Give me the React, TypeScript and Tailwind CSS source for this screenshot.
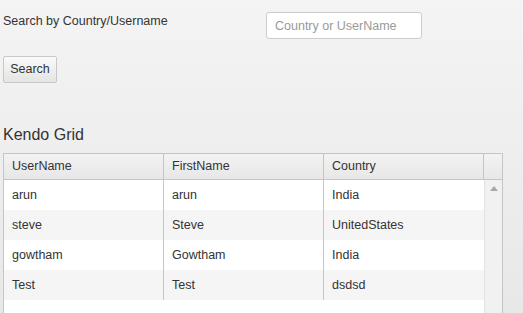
import React from 'react';

const rows = [
  { user: 'arun', first: 'arun', country: 'India' },
  { user: 'steve', first: 'Steve', country: 'UnitedStates' },
  { user: 'gowtham', first: 'Gowtham', country: 'India' },
  { user: 'Test', first: 'Test', country: 'dsdsd' },
];

export default function App() {
  return (
    <div className="w-[523px] h-[313px] overflow-hidden bg-gradient-to-b from-[#f4f4f4] to-[#e8e8e8] pl-[3px] text-[12.5px] text-[#333] font-['Liberation_Sans',Arial,sans-serif]">
      <div className="flex items-start pt-[12px]">
        <label className="w-[263px] pt-[2px] leading-[15px]">Search by Country/Username</label>
        <input
          placeholder="Country or UserName"
          className="w-[156px] h-[27px] px-[8px] bg-white border border-[#cccccc] rounded-[3px] text-[12.5px] placeholder:text-[#999] outline-none"
        />
      </div>

      <button className="mt-[17px] h-[27px] w-[54px] border border-[#c8c8c8] rounded-[2px] bg-gradient-to-b from-[#fafafa] to-[#e4e4e4] text-[12.5px] text-[#333] leading-none">
        Search
      </button>

      <h3 className="mt-[43px] text-[16px] leading-[18px] text-[#333]">Kendo Grid</h3>

      <div className="mt-[9px] w-[500px] border border-[#c5c5c5] bg-white">
        <div className="flex h-[26px] bg-gradient-to-b from-[#f3f3f3] to-[#e7e7e7] border-b border-[#c5c5c5]">
          <div className="w-[160px] border-r border-[#c5c5c5] pl-[8px] flex items-center">UserName</div>
          <div className="w-[160px] border-r border-[#c5c5c5] pl-[8px] flex items-center">FirstName</div>
          <div className="w-[160px] border-r border-[#c5c5c5] pl-[8px] flex items-center">Country</div>
          <div className="flex-1" />
        </div>
        <div className="flex h-[140px]">
          <div className="w-[480px]">
            {rows.map((r, i) => (
              <div key={i} className={`flex h-[30px] ${i % 2 === 1 ? 'bg-[#f5f5f5]' : 'bg-white'}`}>
                <div className="w-[160px] border-r border-[#c5c5c5] pl-[8px] flex items-center">{r.user}</div>
                <div className="w-[160px] border-r border-[#c5c5c5] pl-[8px] flex items-center">{r.first}</div>
                <div className="w-[160px] pl-[8px] flex items-center">{r.country}</div>
              </div>
            ))}
          </div>
          <div className="flex-1 bg-[#f1f1f1] border-l border-[#e2e2e2] flex justify-center pt-[6px]">
            <svg width="8" height="5" viewBox="0 0 8 5">
              <path d="M0 5 L4 0 L8 5 Z" fill="#a8a8a8" />
            </svg>
          </div>
        </div>
      </div>
    </div>
  );
}
